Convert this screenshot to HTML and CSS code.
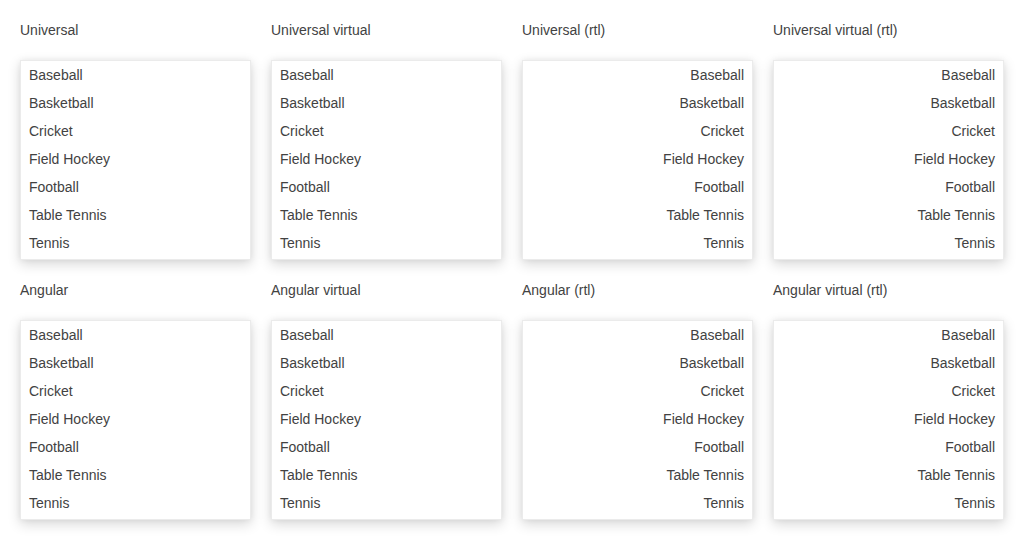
FILE: index.html
```html
<!DOCTYPE html>
<html>
<head>
<meta charset="utf-8">
<link rel="stylesheet" href="styles.css">
</head>
<body>
<div class="grid">
  <section class="demo">
    <div class="label">Universal</div>
    <ul class="list">
      <li>Baseball</li><li>Basketball</li><li>Cricket</li><li>Field Hockey</li><li>Football</li><li>Table Tennis</li><li>Tennis</li>
    </ul>
  </section>
  <section class="demo">
    <div class="label">Universal virtual</div>
    <ul class="list">
      <li>Baseball</li><li>Basketball</li><li>Cricket</li><li>Field Hockey</li><li>Football</li><li>Table Tennis</li><li>Tennis</li>
    </ul>
  </section>
  <section class="demo">
    <div class="label">Universal (rtl)</div>
    <ul class="list rtl">
      <li>Baseball</li><li>Basketball</li><li>Cricket</li><li>Field Hockey</li><li>Football</li><li>Table Tennis</li><li>Tennis</li>
    </ul>
  </section>
  <section class="demo">
    <div class="label">Universal virtual (rtl)</div>
    <ul class="list rtl">
      <li>Baseball</li><li>Basketball</li><li>Cricket</li><li>Field Hockey</li><li>Football</li><li>Table Tennis</li><li>Tennis</li>
    </ul>
  </section>
  <section class="demo">
    <div class="label">Angular</div>
    <ul class="list">
      <li>Baseball</li><li>Basketball</li><li>Cricket</li><li>Field Hockey</li><li>Football</li><li>Table Tennis</li><li>Tennis</li>
    </ul>
  </section>
  <section class="demo">
    <div class="label">Angular virtual</div>
    <ul class="list">
      <li>Baseball</li><li>Basketball</li><li>Cricket</li><li>Field Hockey</li><li>Football</li><li>Table Tennis</li><li>Tennis</li>
    </ul>
  </section>
  <section class="demo">
    <div class="label">Angular (rtl)</div>
    <ul class="list rtl">
      <li>Baseball</li><li>Basketball</li><li>Cricket</li><li>Field Hockey</li><li>Football</li><li>Table Tennis</li><li>Tennis</li>
    </ul>
  </section>
  <section class="demo">
    <div class="label">Angular virtual (rtl)</div>
    <ul class="list rtl">
      <li>Baseball</li><li>Basketball</li><li>Cricket</li><li>Field Hockey</li><li>Football</li><li>Table Tennis</li><li>Tennis</li>
    </ul>
  </section>
</div>
</body>
</html>
```
FILE: styles.css
```css
html, body {
  margin: 0;
  padding: 0;
  background: #fff;
}
body {
  font-family: "Liberation Sans", Arial, sans-serif;
  font-size: 14px;
  color: #424242;
}
.grid {
  display: grid;
  grid-template-columns: repeat(4, 231px);
  column-gap: 20px;
  row-gap: 20px;
  padding: 20px;
}
.label {
  height: 20px;
  line-height: 20px;
  margin-bottom: 20px;
  color: #424242;
}
.list {
  list-style: none;
  margin: 0;
  padding: 0 0 1px;
  background: #fff;
  border: 1px solid rgba(0, 0, 0, 0.08);
  box-shadow: 0 4px 12px rgba(0, 0, 0, 0.16), 0 0 6px rgba(0, 0, 0, 0.05);
}
.list li {
  height: 28px;
  line-height: 27px;
  padding: 0 8px;
  margin-top: 0;
}
.list li:first-child {
  margin-top: 1px;
}
.list.rtl {
  direction: rtl;
}
```
